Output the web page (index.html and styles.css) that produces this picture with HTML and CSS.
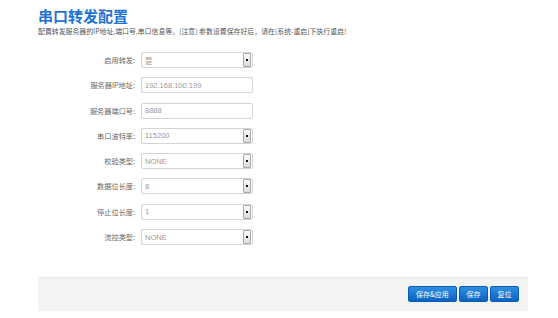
FILE: index.html
```html
<!DOCTYPE html>
<html lang="zh">
<head>
<meta charset="utf-8">
<link rel="stylesheet" href="styles.css">
</head>
<body>
<div class="page">
  <h2 class="title">串口转发配置</h2>
  <p class="desc">配置转发服务器的IP地址,端口号,串口信息等。[注意] 参数设置保存好后，请在[系统-重启]下执行重启!</p>
  <div class="form">
    <div class="row"><label class="lbl">启用转发:</label><div class="sel"><span class="val">是</span><span class="arrow"><i></i></span></div></div>
    <div class="row"><label class="lbl">服务器IP地址:</label><input class="inp" type="text" value="192.168.100.199"></div>
    <div class="row"><label class="lbl">服务器端口号:</label><input class="inp" type="text" value="8888"></div>
    <div class="row"><label class="lbl">串口波特率:</label><div class="sel"><span class="val">115200</span><span class="arrow"><i></i></span></div></div>
    <div class="row"><label class="lbl">校验类型:</label><div class="sel"><span class="val">NONE</span><span class="arrow"><i></i></span></div></div>
    <div class="row"><label class="lbl">数据位长度:</label><div class="sel"><span class="val">8</span><span class="arrow"><i></i></span></div></div>
    <div class="row"><label class="lbl">停止位长度:</label><div class="sel"><span class="val">1</span><span class="arrow"><i></i></span></div></div>
    <div class="row"><label class="lbl">流控类型:</label><div class="sel"><span class="val">NONE</span><span class="arrow"><i></i></span></div></div>
  </div>
  <div class="actions">
    <button class="btn btn-wide">保存&amp;应用</button>
    <button class="btn">保存</button>
    <button class="btn">复位</button>
  </div>
</div>
</body>
</html>
```
FILE: styles.css
```css
html, body {
  margin: 0;
  padding: 0;
  background: #fff;
}
body {
  font-family: "Microsoft YaHei", "Noto Sans CJK SC", "Liberation Sans", sans-serif;
  color: #555;
}
.page {
  width: 490px;
  padding: 8px 0 0 38px;
}
.title {
  margin: 0;
  font-size: 15px;
  line-height: 16px;
  font-weight: bold;
  color: #1f74d3;
}
.desc {
  margin: 2px 0 0 0;
  font-size: 6.9px;
  line-height: 10px;
  color: #555;
  white-space: nowrap;
}
.form {
  display: flex;
  flex-direction: column;
  gap: 9.3px;
  padding-top: 16px;
  height: 225px;
}
.row {
  display: flex;
  align-items: center;
  height: 16px;
}
.lbl {
  width: 97px;
  text-align: right;
  font-size: 7.2px;
  color: #666;
  padding-right: 6px;
}
.sel, .inp {
  box-sizing: border-box;
  width: 112px;
  height: 16px;
  border: 1px solid #d4d4d4;
  border-radius: 2px;
  background: #fff;
  font-family: "Liberation Sans", "Noto Sans CJK SC", sans-serif;
  font-size: 7.5px;
  color: #9a9a9a;
  display: flex;
  align-items: center;
  justify-content: space-between;
  padding: 0 0 0 3px;
  margin: 0;
  outline: none;
}
.val {
  font-family: "Liberation Sans", "Noto Sans CJK SC", sans-serif;
}
.arrow {
  width: 6px;
  height: 12px;
  margin-right: 1px;
  border: 1px solid #a8a8a8;
  border-radius: 1px;
  background: linear-gradient(#fafafa, #dcdcdc);
  display: flex;
  align-items: center;
  justify-content: center;
}
.arrow i {
  display: block;
  width: 2px;
  height: 2px;
  background: #111;
}
.actions {
  box-sizing: border-box;
  width: 490px;
  height: 34px;
  background: #f3f3f3;
  border-top: 1px solid #e6e6e6;
  display: flex;
  justify-content: flex-end;
  align-items: center;
  gap: 2px;
  padding: 0 9px 1px 0;
}
.btn {
  box-sizing: border-box;
  width: 29px;
  height: 16px;
  padding: 0;
  border: 1px solid #0a5cb0;
  border-radius: 2px;
  background: linear-gradient(#2d8ee3, #0b63c0);
  color: #fff;
  font-family: "Microsoft YaHei", "Noto Sans CJK SC", sans-serif;
  font-size: 7px;
  line-height: 14px;
  white-space: nowrap;
  text-align: center;
}
.btn-wide {
  width: 49px;
}
```
